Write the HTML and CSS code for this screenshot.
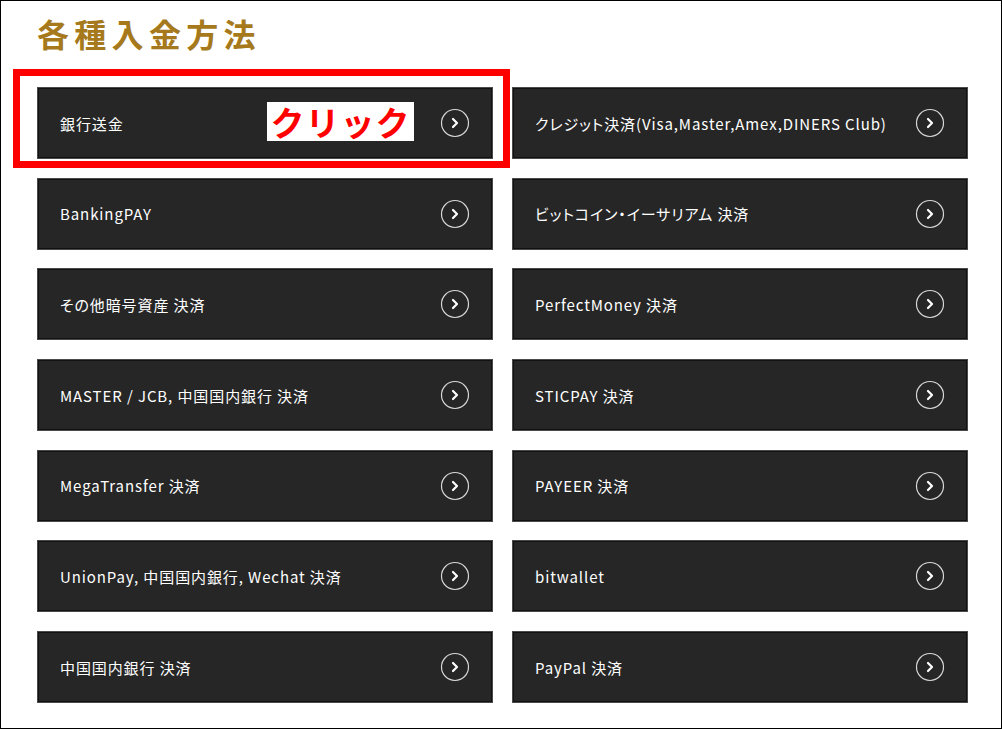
FILE: index.html
```html
<!DOCTYPE html>
<html>
  <head>
    <meta charset="UTF-8" />
    <title>各種入金方法</title>
    <link rel="stylesheet" href="styles.css">
  </head>
  <body>
    <div class="frame">
      <h2 class="section-title">各種入金方法</h2>

      <div class="method-grid">
        <a class="method-card" href="#">
          <span class="method-name">銀行送金</span>
          <svg class="method-arrow" viewBox="0 0 30 30"><circle cx="15" cy="15" r="13.5" /><path d="M13 11L17 15L13 19" /></svg>
        </a>
        <a class="method-card" href="#">
          <span class="method-name">クレジット決済(Visa,Master,Amex,DINERS Club)</span>
          <svg class="method-arrow" viewBox="0 0 30 30"><circle cx="15" cy="15" r="13.5" /><path d="M13 11L17 15L13 19" /></svg>
        </a>
        <a class="method-card" href="#">
          <span class="method-name">BankingPAY</span>
          <svg class="method-arrow" viewBox="0 0 30 30"><circle cx="15" cy="15" r="13.5" /><path d="M13 11L17 15L13 19" /></svg>
        </a>
        <a class="method-card" href="#">
          <span class="method-name">ビットコイン・イーサリアム 決済</span>
          <svg class="method-arrow" viewBox="0 0 30 30"><circle cx="15" cy="15" r="13.5" /><path d="M13 11L17 15L13 19" /></svg>
        </a>
        <a class="method-card" href="#">
          <span class="method-name">その他暗号資産 決済</span>
          <svg class="method-arrow" viewBox="0 0 30 30"><circle cx="15" cy="15" r="13.5" /><path d="M13 11L17 15L13 19" /></svg>
        </a>
        <a class="method-card" href="#">
          <span class="method-name">PerfectMoney 決済</span>
          <svg class="method-arrow" viewBox="0 0 30 30"><circle cx="15" cy="15" r="13.5" /><path d="M13 11L17 15L13 19" /></svg>
        </a>
        <a class="method-card" href="#">
          <span class="method-name">MASTER / JCB, 中国国内銀行 決済</span>
          <svg class="method-arrow" viewBox="0 0 30 30"><circle cx="15" cy="15" r="13.5" /><path d="M13 11L17 15L13 19" /></svg>
        </a>
        <a class="method-card" href="#">
          <span class="method-name">STICPAY 決済</span>
          <svg class="method-arrow" viewBox="0 0 30 30"><circle cx="15" cy="15" r="13.5" /><path d="M13 11L17 15L13 19" /></svg>
        </a>
        <a class="method-card" href="#">
          <span class="method-name">MegaTransfer 決済</span>
          <svg class="method-arrow" viewBox="0 0 30 30"><circle cx="15" cy="15" r="13.5" /><path d="M13 11L17 15L13 19" /></svg>
        </a>
        <a class="method-card" href="#">
          <span class="method-name">PAYEER 決済</span>
          <svg class="method-arrow" viewBox="0 0 30 30"><circle cx="15" cy="15" r="13.5" /><path d="M13 11L17 15L13 19" /></svg>
        </a>
        <a class="method-card" href="#">
          <span class="method-name">UnionPay, 中国国内銀行, Wechat 決済</span>
          <svg class="method-arrow" viewBox="0 0 30 30"><circle cx="15" cy="15" r="13.5" /><path d="M13 11L17 15L13 19" /></svg>
        </a>
        <a class="method-card" href="#">
          <span class="method-name">bitwallet</span>
          <svg class="method-arrow" viewBox="0 0 30 30"><circle cx="15" cy="15" r="13.5" /><path d="M13 11L17 15L13 19" /></svg>
        </a>
        <a class="method-card" href="#">
          <span class="method-name">中国国内銀行 決済</span>
          <svg class="method-arrow" viewBox="0 0 30 30"><circle cx="15" cy="15" r="13.5" /><path d="M13 11L17 15L13 19" /></svg>
        </a>
        <a class="method-card" href="#">
          <span class="method-name">PayPal 決済</span>
          <svg class="method-arrow" viewBox="0 0 30 30"><circle cx="15" cy="15" r="13.5" /><path d="M13 11L17 15L13 19" /></svg>
        </a>
      </div>

      <!-- annotation over the first card -->
      <div class="click-mark"></div>
      <div class="click-label">クリック</div>
    </div>
  </body>
</html>
```

FILE: styles.css
```css
:root {
  --gold: #a67a1c;
  --card-bg: #262626;
  --card-edge: #4a4a4a;
  --mark-red: #ff0000;
}

* {
  margin: 0;
  padding: 0;
  box-sizing: border-box;
}

body {
  font-family: "Noto Sans CJK JP", "Noto Sans", sans-serif;
  background-color: #ffffff;
  width: 1002px;
  height: 729px;
  overflow: hidden;
}

.frame {
  position: relative;
  width: 1002px;
  height: 729px;
  border: 1px solid #000000;
  padding: 0 0 0 36px;
}

.section-title {
  font-size: 32px;
  font-weight: 700;
  color: var(--gold);
  letter-spacing: 5.3px;
  line-height: 1;
  padding-top: 16px;
  height: 86px;
}

.method-grid {
  display: grid;
  grid-template-columns: 456px 456px;
  grid-auto-rows: 72px;
  column-gap: 19px;
  row-gap: 18.7px;
}

.method-card {
  display: flex;
  align-items: center;
  justify-content: space-between;
  padding: 0 22px 0 22px;
  background-color: var(--card-bg);
  border: 1px solid var(--card-edge);
  box-shadow: inset 0 0 0 1px #111111;
  color: #ffffff;
  text-decoration: none;
}

.method-name {
  font-size: 15px;
  letter-spacing: 0.9px;
  line-height: 1;
  font-feature-settings: "palt";
}

.method-arrow {
  width: 30px;
  height: 30px;
  flex-shrink: 0;
}

.method-arrow circle {
  fill: none;
  stroke: #d8d8d8;
  stroke-width: 1.2;
}

.method-arrow path {
  fill: none;
  stroke: #ffffff;
  stroke-width: 2.2;
  stroke-linecap: round;
  stroke-linejoin: round;
}

.click-mark {
  position: absolute;
  left: 12px;
  top: 68px;
  width: 497px;
  height: 99px;
  border: 7px solid var(--mark-red);
}

.click-label {
  position: absolute;
  left: 266px;
  top: 101px;
  width: 147px;
  height: 39px;
  background-color: #ffffff;
  color: var(--mark-red);
  font-size: 34px;
  font-weight: 700;
  line-height: 39px;
  letter-spacing: 1px;
  text-align: center;
  white-space: nowrap;
}
```
